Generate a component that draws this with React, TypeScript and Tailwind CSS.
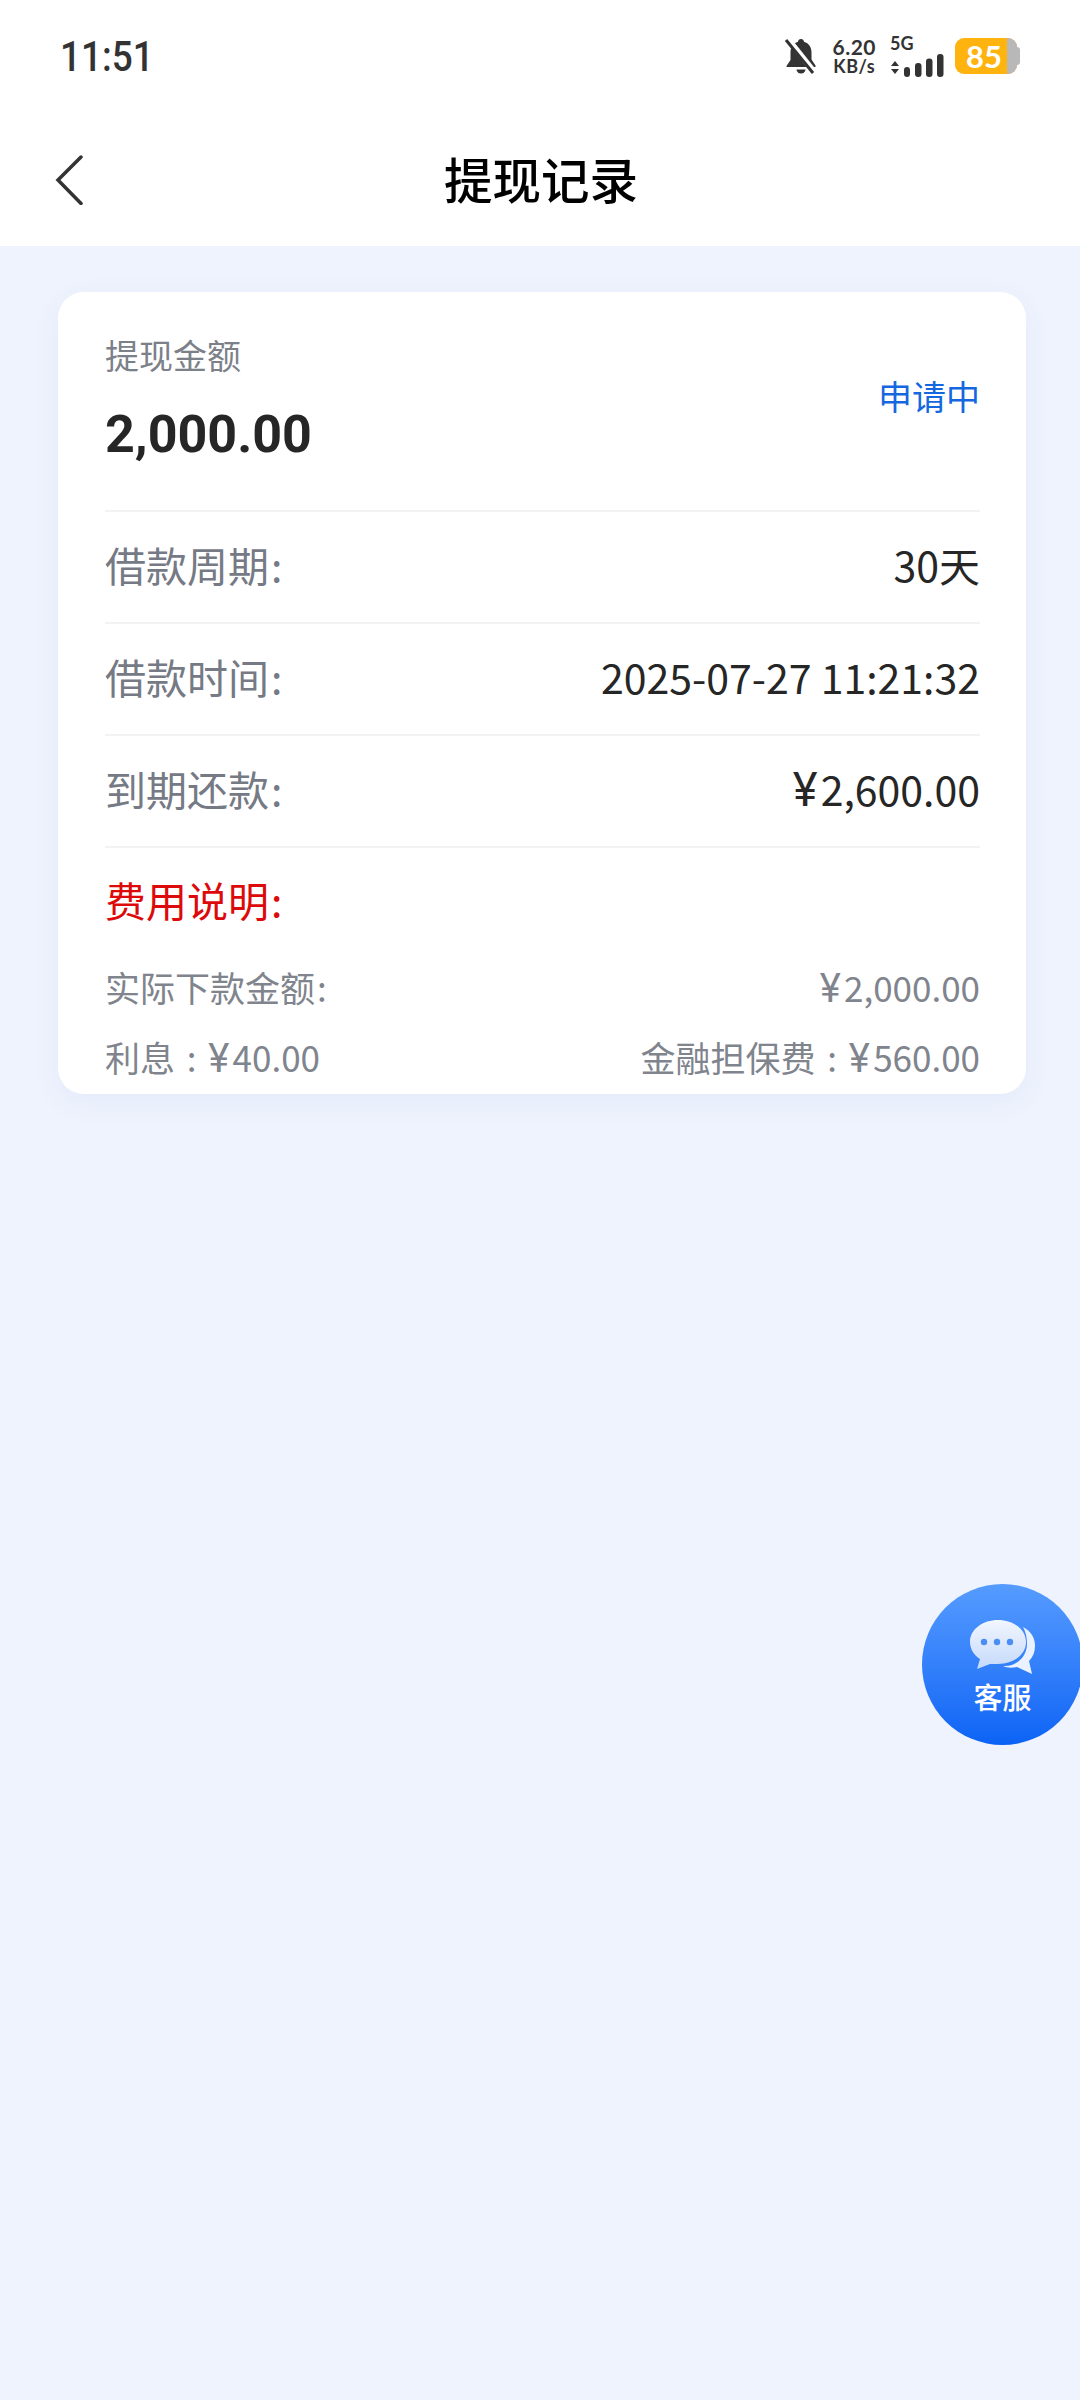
function Yen({ children }: { children: string }) {
  return (
    <span>
      <span className="font-['Inter',sans-serif] text-[1.12em] leading-none mr-[3px]">¥</span>
      {children}
    </span>
  );
}

function Colon() {
  return <span className="ml-[2px]">:</span>;
}

export default function App() {
  const font = { fontFamily: '"Noto Sans CJK SC", sans-serif' };
  const rows = [
    { k: "借款周期", v: <span>30天</span> },
    { k: "借款时间", v: <span>2025-07-27 11:21:32</span> },
    { k: "到期还款", v: <Yen>2,600.00</Yen> },
  ];
  return (
    <div className="relative w-[1080px] h-[2400px] overflow-hidden bg-[#eef3fd]" style={font}>
      <div className="bg-white h-[246px] flex flex-col">
        <div className="h-[100px] flex items-center justify-between pl-[60px] pr-[60px] pt-[12px]">
          <span className="text-[42px] font-medium text-[#333] font-['Roboto',sans-serif] origin-left scale-x-[0.88]">11:51</span>
          <div className="flex items-center">
            <svg width="34" height="38" viewBox="0 0 34 38" className="mr-[14px]">
              <path d="M17 2c1.700 0 3 1.200 3 2.800 5 1.400 7.500 5.600 7.500 10.700v7l4 6v1.500H2.500V29l4-6v-7.500C6.500 10.400 9 6.200 14 4.800 14 3.200 15.300 2 17 2z" fill="#333" />
              <path d="M12.500 32.500h9a4.500 4 0 0 1-9 0z" fill="#333" />
              <path d="M3 1l28 35" stroke="#fff" strokeWidth="6" />
              <path d="M2 3l27 33" stroke="#333" strokeWidth="3" />
            </svg>
            <div className="flex flex-col items-center text-[#333] font-['Lato',sans-serif] font-bold leading-none mr-[14px]">
              <span className="text-[21px] leading-[21px] tracking-[0.5px]">6.20</span>
              <span className="text-[18px] leading-[19px] tracking-[0.5px]">KB/s</span>
            </div>
            <div className="flex flex-col mr-[9px]">
              <span className="text-[18px] leading-[19px] font-bold text-[#333] font-['Lato',sans-serif]">5G</span>
              <svg width="56" height="26" viewBox="0 0 56 26">
                <path d="M1 13l4-5 4 5zM1 16h8l-4 5z" fill="#333" />
                <rect x="14" y="14" width="6" height="10" rx="3" fill="#333" />
                <rect x="25" y="10" width="6.500" height="14" rx="3" fill="#333" />
                <rect x="36" y="5.500" width="6.500" height="18.500" rx="3" fill="#333" />
                <rect x="47" y="1" width="6.500" height="23" rx="3" fill="#333" />
              </svg>
            </div>
            <div className="relative w-[62px] h-[36px] rounded-[9px] bg-[#ffb30f] flex items-center pl-[11px] text-white font-bold text-[31px] font-['Lato',sans-serif] leading-none overflow-hidden">
              85
              <span className="absolute right-0 top-0 bottom-0 w-[10px] bg-[#b8b8b8]" />
            </div>
            <span className="w-[3px] h-[18px] bg-[#b8b8b8] rounded-r-[3px]" />
          </div>
        </div>
        <div className="relative flex-1 flex items-center justify-center pt-[10px] pl-[2px]">
          <svg width="30" height="50" viewBox="0 0 30 50" className="absolute left-[55px] top-[55px]">
            <path d="M26 2L3 25l23 23.500" fill="none" stroke="#333" strokeWidth="3.500" strokeLinecap="round" />
          </svg>
          <span className="text-[48.500px] font-medium text-black leading-none">提现记录</span>
        </div>
      </div>

      <div className="ml-[58px] mr-[54px] mt-[46px] h-[802px] bg-white rounded-[26px] pl-[47px] pr-[46px] shadow-[0_8px_30px_rgba(90,110,200,0.06)]">
        <div className="h-[220px] border-b-2 border-[#f1f2f4] flex justify-between">
          <div className="flex flex-col pt-[40px]">
            <span className="text-[34px] text-[#7c8089] leading-[46px]">提现金额</span>
            <span className="text-[52px] font-bold text-[#262626] leading-[60px] mt-[27px] font-['Roboto',sans-serif]">2,000.00</span>
          </div>
          <span className="text-[34px] text-[#1567e0] leading-[46px] mt-[81px]">申请中</span>
        </div>
        {rows.map((r) => (
          <div key={r.k} className="h-[112px] pb-[5px] border-b-2 border-[#f1f2f4] flex items-center justify-between text-[41px]">
            <span className="text-[#757a85]">
              {r.k}
              <Colon />
            </span>
            <span className="text-[#262626]">{r.v}</span>
          </div>
        ))}
        <div className="h-[108px] pb-[5px] flex items-center">
          <span className="text-[41px] font-normal text-[#dc0a0a]">
            费用说明
            <Colon />
          </span>
        </div>
        <div className="h-[62px] flex items-center justify-between text-[35px] text-[#80848d]">
          <span>
            实际下款金额
            <Colon />
          </span>
          <Yen>2,000.00</Yen>
        </div>
        <div className="mt-[8px] h-[62px] flex items-center justify-between text-[35px] text-[#80848d]">
          <span>
            利息
            <span className="inline-block w-[33px] text-center">:</span>
            <Yen>40.00</Yen>
          </span>
          <span>
            金融担保费
            <span className="inline-block w-[33px] text-center">:</span>
            <Yen>560.00</Yen>
          </span>
        </div>
      </div>

      <div className="absolute left-[922px] top-[1584px] w-[161px] h-[161px] rounded-full bg-gradient-to-b from-[#559bff] to-[#0a63f5] flex flex-col items-center pt-[36px]">
        <svg width="66" height="56" viewBox="0 0 66 56">
          <defs>
            <linearGradient id="b" x1="0" y1="0" x2="0" y2="1">
              <stop offset="0" stopColor="#f2f6ff" />
              <stop offset="1" stopColor="#c4d9fa" />
            </linearGradient>
          </defs>
          <path d="M53 7c8 4 12 11 12 19 0 6-2 11-6 15l3 13-15-7c-5 1-10 1-14-1 14 1 24-10 24-22 0-6-1-12-4-17z" fill="#eaf2ff" />
          <path d="M28 0c15 0 28 9 28 22S43 44 28 44c-3 0-6 0-8 0L7 49l3-10C4 35 0 29 0 22 0 9 13 0 28 0z" fill="url(#b)" />
          <circle cx="14" cy="22" r="3.200" fill="#4a8ef5" />
          <circle cx="27" cy="22" r="3.200" fill="#4a8ef5" />
          <circle cx="40" cy="22" r="3.200" fill="#4a8ef5" />
        </svg>
        <span className="text-[29px] text-white font-medium leading-[36px] mt-[2px]">客服</span>
      </div>
    </div>
  );
}
